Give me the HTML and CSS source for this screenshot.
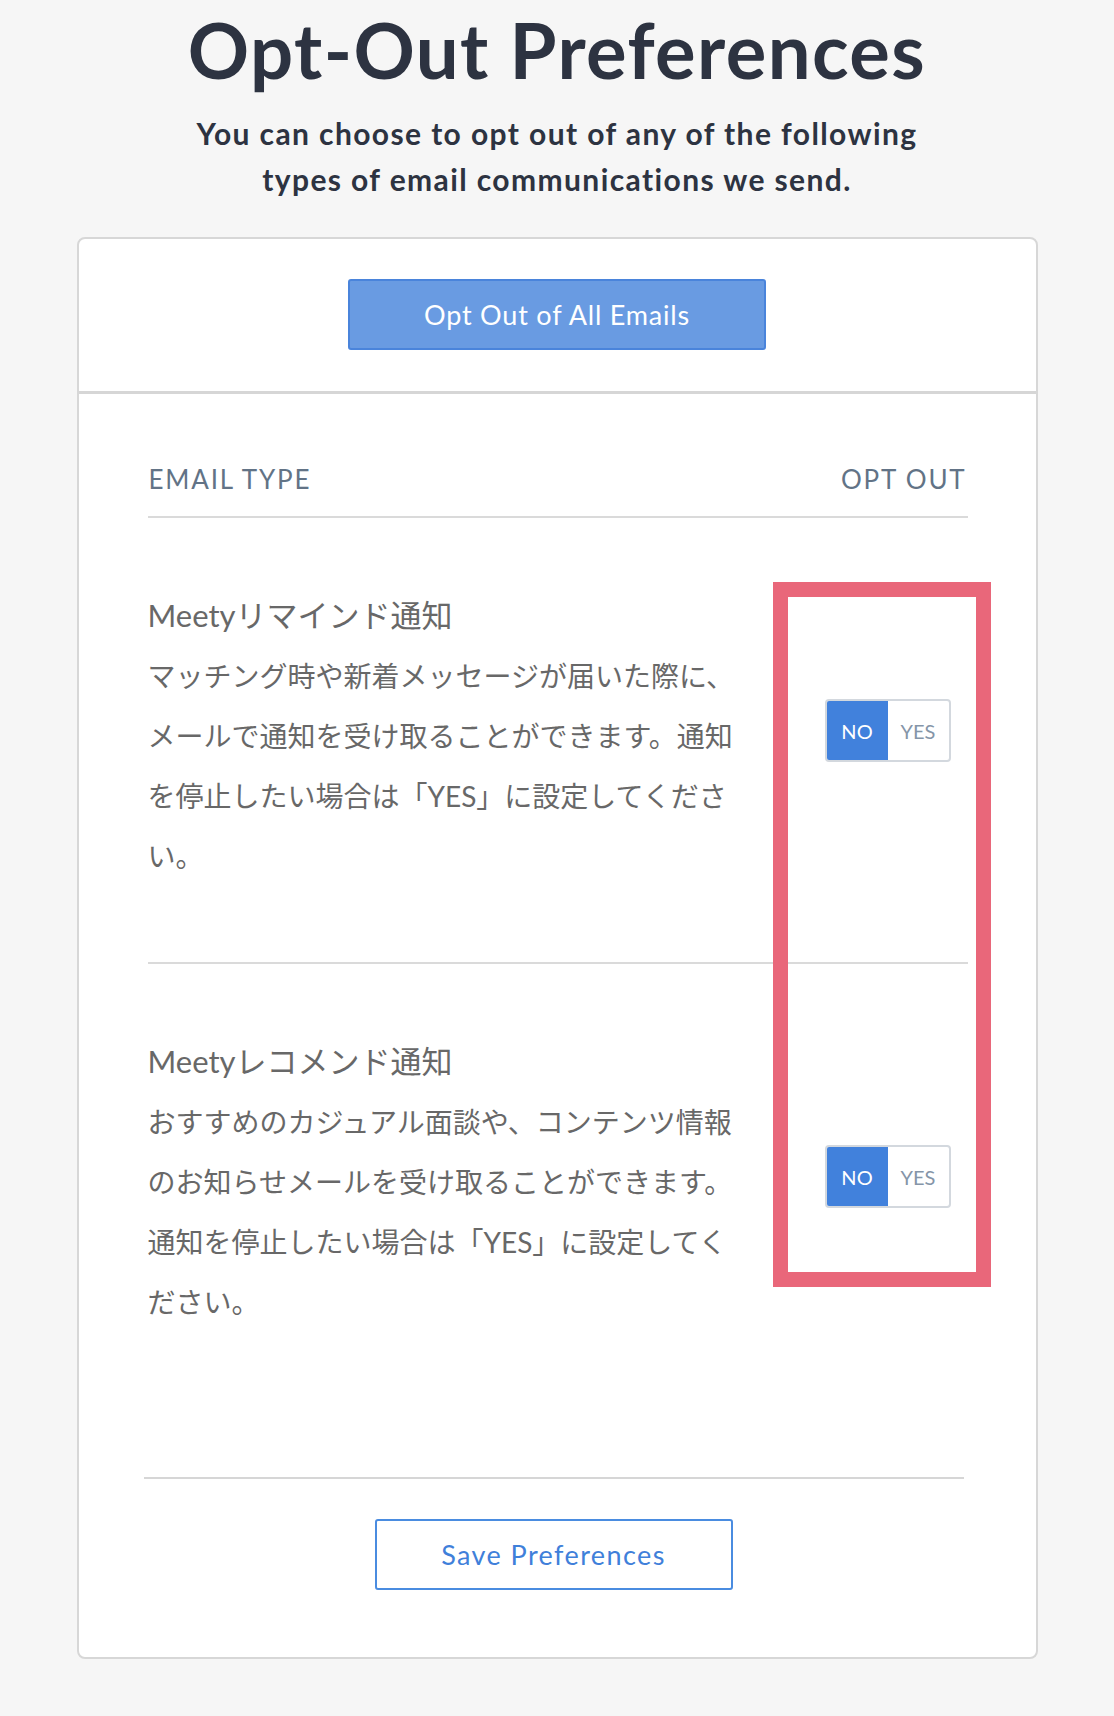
FILE: index.html
```html
<!DOCTYPE html>
<html lang="ja">
<head>
    <meta charset="UTF-8">
    <meta name="viewport" content="width=device-width, initial-scale=1.0">
    <title>Opt-Out Preferences</title>
    <link rel="stylesheet" href="styles.css">
</head>
<body>
    <div id="page">
        <h1>Opt-Out Preferences</h1>
        <p class="lead">You can choose to opt out of any of the following<br>types of email communications we send.</p>

        <div class="card">
            <div class="card-top">
                <button class="btn-all">Opt Out of All Emails</button>
            </div>

            <div class="card-body">
                <div class="table-head">
                    <span>EMAIL TYPE</span>
                    <span>OPT OUT</span>
                </div>

                <div class="pref-row">
                    <div class="pref-text">
                        <div class="pref-name">Meetyリマインド通知</div>
                        <div class="pref-desc">マッチング時や新着メッセージが届いた際に、メールで通知を受け取ることができます。通知を停止したい場合は「YES」に設定してください。</div>
                    </div>
                    <div class="toggle">
                        <span class="toggle-opt active">NO</span>
                        <span class="toggle-opt">YES</span>
                    </div>
                </div>

                <div class="pref-row last">
                    <div class="pref-text">
                        <div class="pref-name">Meetyレコメンド通知</div>
                        <div class="pref-desc">おすすめのカジュアル面談や、コンテンツ情報のお知らせメールを受け取ることができます。通知を停止したい場合は「YES」に設定してください。</div>
                    </div>
                    <div class="toggle">
                        <span class="toggle-opt active">NO</span>
                        <span class="toggle-opt">YES</span>
                    </div>
                </div>
            </div>

            <div class="card-foot">
                <button class="btn-save">Save Preferences</button>
            </div>
        </div>
    </div>

    <!-- annotation box drawn over the toggles -->
    <div class="highlight"></div>
</body>
</html>
```

FILE: styles.css
```css
body {
    margin: 0;
    padding: 0;
    background-color: #f6f6f6;
    font-family: Lato, "Noto Sans CJK JP", sans-serif;
    color: #2d3341;
}
#page {
    width: 961px;
    margin: 0 auto;
    padding: 4px 0 57px;
}
h1 {
    margin: 0;
    font-size: 76px;
    line-height: 91px;
    font-weight: 700;
    text-align: center;
    letter-spacing: 1.4px;
}
.lead {
    margin: 15px 0 35px;
    font-size: 30px;
    line-height: 46px;
    font-weight: 700;
    text-align: center;
    letter-spacing: 1.4px;
}
.card {
    background-color: white;
    border: 2px solid #d7d7d7;
    border-radius: 8px;
}
.card-top {
    padding: 40px 0 41px;
    text-align: center;
    border-bottom: 3px solid #d6d6d6;
}
button {
    font-family: inherit;
    cursor: pointer;
}
.btn-all {
    width: 418px;
    height: 71px;
    background-color: #699be2;
    border: 2px solid #4a84db;
    border-radius: 3px;
    color: white;
    font-size: 27px;
    letter-spacing: 0.8px;
}
.card-body {
    padding: 70px 68px 69px 69px;
}
.table-head {
    display: flex;
    justify-content: space-between;
    padding: 0 1px 22px 1px;
    border-bottom: 2px solid #dadada;
    font-size: 26px;
    line-height: 30px;
    letter-spacing: 1.8px;
    color: #627386;
}
.pref-row {
    display: flex;
    justify-content: space-between;
    align-items: flex-start;
    padding: 77px 0 76px;
    border-bottom: 2px solid #dadada;
}
.pref-row.last {
    border-bottom: none;
}
.pref-text {
    width: 600px;
    color: #686868;
}
.pref-name {
    font-size: 31px;
    line-height: 40px;
    margin-bottom: 11px;
}
.pref-desc {
    font-size: 28px;
    line-height: 60px;
}
.toggle {
    display: flex;
    margin: 104px 17px 0 0;
    border: 2px solid #d3d8de;
    border-radius: 4px;
    overflow: hidden;
}
.toggle-opt {
    width: 61px;
    height: 59px;
    display: flex;
    align-items: center;
    justify-content: center;
    font-size: 20px;
    color: #8595a8;
}
.toggle-opt.active {
    background-color: #4181dc;
    color: white;
}
.card-foot {
    margin: 0 72px 0 65px;
    padding: 40px 0 67px;
    border-top: 2px solid #d6d6d6;
    text-align: center;
}
.btn-save {
    width: 358px;
    height: 71px;
    background-color: white;
    border: 2px solid #4a8ce0;
    border-radius: 3px;
    color: #3f80da;
    font-size: 27px;
    letter-spacing: 1.4px;
}
.highlight {
    position: absolute;
    top: 582px;
    left: 773px;
    width: 218px;
    height: 705px;
    box-sizing: border-box;
    border: 15px solid #e9677a;
}
```
